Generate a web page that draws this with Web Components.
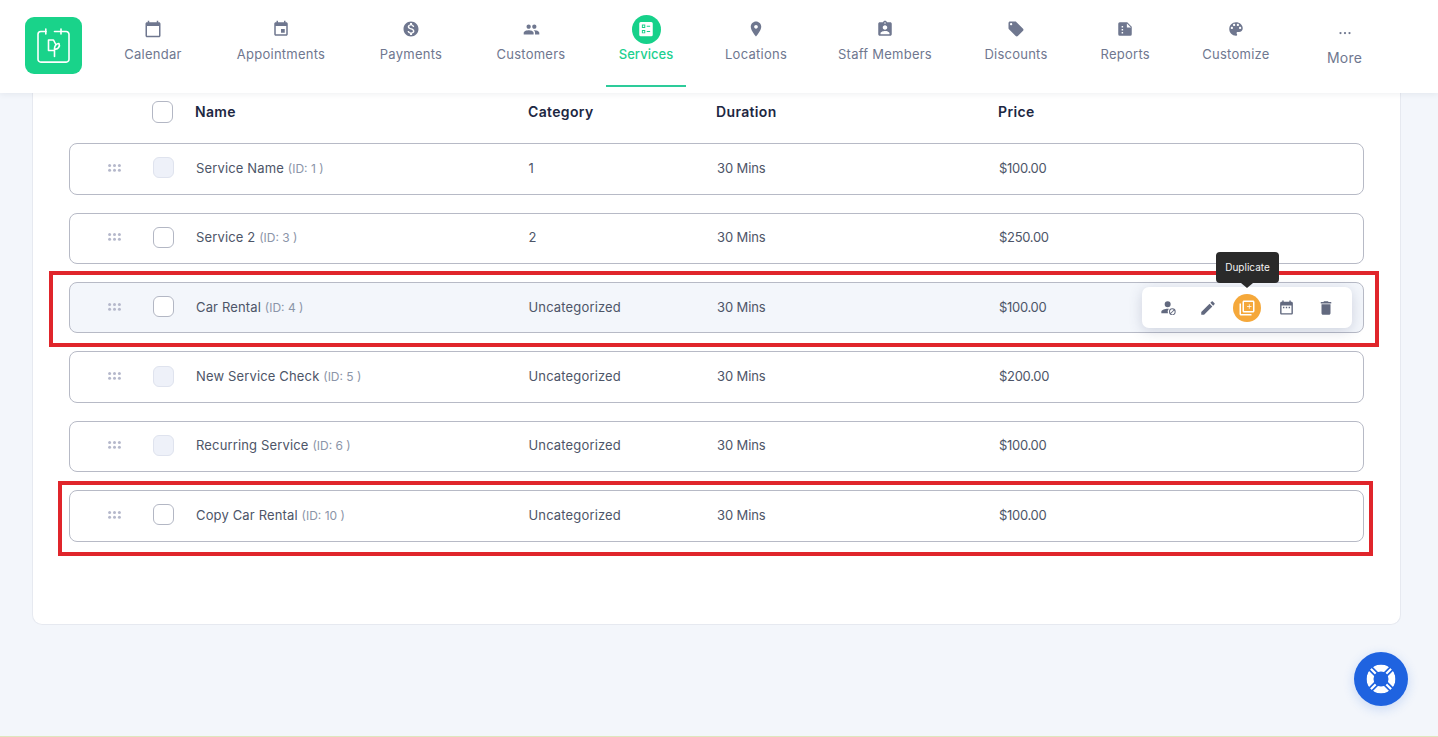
<!DOCTYPE html>
<html lang="en">
<head>
<meta charset="utf-8">
<title>Services</title>
<style>
  html, body { margin: 0; height: 100%; overflow: hidden; }
  body { background: #f3f6fb; font-family: Inter, "Open Sans", sans-serif; }
</style>
</head>
<body>
<app-page>
  <app-header slot="header">
    <nav-item icon="calendar" w="86">Calendar</nav-item>
    <nav-item icon="event" w="116">Appointments</nav-item>
    <nav-item icon="money" w="90">Payments</nav-item>
    <nav-item icon="people" w="96">Customers</nav-item>
    <nav-item icon="services" w="80" active>Services</nav-item>
    <nav-item icon="place" w="86">Locations</nav-item>
    <nav-item icon="badge" w="118">Staff Members</nav-item>
    <nav-item icon="tag" w="90">Discounts</nav-item>
    <nav-item icon="report" w="74.5">Reports</nav-item>
    <nav-item icon="palette" w="93">Customize</nav-item>
    <nav-item icon="more" w="70" more>More</nav-item>
  </app-header>
  <service-table>
    <service-row sid="1" category="1" duration="30 Mins" price="$100.00" off>Service Name</service-row>
    <service-row sid="3" category="2" duration="30 Mins" price="$250.00">Service 2</service-row>
    <service-row sid="4" category="Uncategorized" duration="30 Mins" price="$100.00" hover>
      Car Rental
      <mark-box slot="over" box="-11 15 14 -20"></mark-box>
      <row-actions slot="over"></row-actions>
    </service-row>
    <service-row sid="5" category="Uncategorized" duration="30 Mins" price="$200.00" off>New Service Check</service-row>
    <service-row sid="6" category="Uncategorized" duration="30 Mins" price="$100.00" off>Recurring Service</service-row>
    <service-row sid="10" category="Uncategorized" duration="30 Mins" price="$100.00">
      Copy Car Rental
      <mark-box slot="over" box="-9 9 14 -11"></mark-box>
    </service-row>
  </service-table>
  <help-button></help-button>
</app-page>

<script>
const ICONS = {
  calendar: 'M20 3h-1V1h-2v2H7V1H5v2H4c-1.1 0-2 .9-2 2v16c0 1.1.9 2 2 2h16c1.1 0 2-.9 2-2V5c0-1.1-.9-2-2-2zm0 18H4V8h16v13z',
  event: 'M17 12h-5v5h5v-5zM16 1v2H8V1H6v2H5c-1.11 0-1.99.9-1.99 2L3 19c0 1.1.89 2 2 2h14c1.1 0 2-.9 2-2V5c0-1.1-.9-2-2-2h-1V1h-2zm3 18H5V8h14v11z',
  money: 'M12 2C6.48 2 2 6.48 2 12s4.48 10 10 10 10-4.48 10-10S17.52 2 12 2zm1.41 16.09V20h-2.67v-1.93c-1.71-.36-3.16-1.46-3.27-3.4h1.96c.1 1.05.82 1.87 2.65 1.87 1.96 0 2.4-.98 2.4-1.59 0-.83-.44-1.61-2.67-2.14-2.48-.6-4.18-1.62-4.18-3.67 0-1.72 1.39-2.84 3.11-3.21V4h2.67v1.95c1.86.45 2.79 1.86 2.85 3.39H14.3c-.05-1.11-.64-1.87-2.22-1.87-1.5 0-2.4.68-2.4 1.64 0 .84.65 1.39 2.67 1.91s4.18 1.39 4.18 3.91c-.01 1.83-1.38 2.83-3.12 3.16z',
  people: 'M16 11c1.66 0 2.99-1.34 2.99-3S17.66 5 16 5c-1.66 0-3 1.34-3 3s1.34 3 3 3zm-8 0c1.66 0 2.99-1.34 2.99-3S9.66 5 8 5C6.34 5 5 6.34 5 8s1.34 3 3 3zm0 2c-2.33 0-7 1.17-7 3.5V19h14v-2.5c0-2.33-4.67-3.5-7-3.5zm8 0c-.29 0-.62.02-.97.05 1.16.84 1.97 1.97 1.97 3.45V19h6v-2.5c0-2.33-4.67-3.5-7-3.5z',
  services: 'M5 2.500h14a2 2 0 0 1 2 2v15a2 2 0 0 1-2 2H5a2 2 0 0 1-2-2v-15a2 2 0 0 1 2-2zm1.500 3.500v4.500h4.500V6h-4.500zm1.300 1.300h1.900v1.900H7.800V7.300zm-1.300 6v4.500h4.500v-4.500h-4.500zm1.300 1.300h1.900v1.900H7.800v-1.900zM13 7.500V9h4.500V7.500H13zm0 7V16h4.500v-1.500H13z',
  place: 'M12 2C8.13 2 5 5.13 5 9c0 5.25 7 13 7 13s7-7.75 7-13c0-3.87-3.130-7-7-7zm0 9.500c-1.380 0-2.500-1.120-2.500-2.500s1.120-2.500 2.500-2.500 2.500 1.120 2.500 2.500-1.120 2.500-2.500 2.500z',
  badge: 'M19 3h-4.180C14.400 1.840 13.300 1 12 1c-1.300 0-2.400.84-2.820 2H5c-1.100 0-2 .9-2 2v14c0 1.100.9 2 2 2h14c1.100 0 2-.9 2-2V5c0-1.100-.9-2-2-2zm-7 0c.55 0 1 .45 1 1s-.45 1-1 1-1-.45-1-1 .45-1 1-1zm0 4c1.660 0 3 1.340 3 3s-1.340 3-3 3-3-1.340-3-3 1.340-3 3-3zm6 12H6v-1.400c0-2 4-3.100 6-3.100s6 1.100 6 3.100V19z',
  tag: 'M21.410 11.580l-9-9C12.050 2.220 11.550 2 11 2H4c-1.100 0-2 .9-2 2v7c0 .55.22 1.050.59 1.420l9 9c.36.36.86.58 1.410.58.55 0 1.050-.22 1.410-.59l7-7c.37-.36.59-.86.59-1.410 0-.55-.23-1.060-.59-1.420zM5.500 7C4.670 7 4 6.330 4 5.500S4.670 4 5.500 4 7 4.670 7 5.500 6.330 7 5.500 7z',
  report: 'M5 3h10l6 6v10a2 2 0 0 1-2 2H5a2 2 0 0 1-2-2V5a2 2 0 0 1 2-2zm9.500 1.500v5.500h5.500zM7.500 8v2h2V8zm0 4v2h2v-2zm0 4v2h2v-2z',
  palette: 'M12 3c-4.970 0-9 4.030-9 9s4.030 9 9 9c.83 0 1.500-.67 1.500-1.500 0-.39-.15-.74-.39-1.010-.23-.26-.38-.61-.38-.99 0-.83.67-1.500 1.500-1.500H16c2.760 0 5-2.240 5-5 0-4.420-4.030-8-9-8zm-5.500 9c-.83 0-1.500-.67-1.500-1.500S5.670 9 6.500 9 8 9.670 8 10.500 7.330 12 6.500 12zm3-4C8.670 8 8 7.330 8 6.500S8.670 5 9.500 5s1.500.67 1.500 1.500S10.330 8 9.500 8zm5 0c-.83 0-1.500-.67-1.500-1.500S13.670 5 14.500 5s1.500.67 1.500 1.500S15.330 8 14.500 8zm3 4c-.83 0-1.500-.67-1.500-1.500S16.670 9 17.500 9s1.500.67 1.500 1.500-.67 1.500-1.500 1.500z',
  more: 'M6 10.500a1.500 1.500 0 1 0 0 3 1.500 1.500 0 0 0 0-3zm6 0a1.500 1.500 0 1 0 0 3 1.500 1.500 0 0 0 0-3zm6 0a1.500 1.500 0 1 0 0 3 1.500 1.500 0 0 0 0-3z',
  userOff: 'M11.500 2a4.500 4.500 0 1 1 0 9 4.500 4.500 0 0 1 0-9zM2 20v-2.500C2 14.500 8 13 11.500 13c.6 0 1.200.04 1.800.12A6.500 6.500 0 0 0 12 20H2zM18.500 12.500a5 5 0 1 1 0 10 5 5 0 0 1 0-10zm0 1.500a3.500 3.500 0 0 0-2.800 5.600l4.900-4.900a3.500 3.500 0 0 0-2.100-.7zm2.800 1.900-4.900 4.900a3.500 3.500 0 0 0 4.900-4.900z',
  edit: 'M3 17.250V21h3.750L17.810 9.940l-3.750-3.750L3 17.250zM20.710 7.040c.39-.39.39-1.020 0-1.410l-2.340-2.340c-.39-.39-1.020-.39-1.410 0l-1.830 1.830 3.750 3.750 1.830-1.830z',
  copy: 'M4 6H2v14c0 1.100.9 2 2 2h14v-2H4V6zm16-4H8c-1.100 0-2 .9-2 2v12c0 1.100.9 2 2 2h12c1.100 0 2-.9 2-2V4c0-1.100-.9-2-2-2zm0 14H8V4h12v12zm-5.500-3h1v-2.500H18v-1h-2.500V7h-1v2.500H12v1h2.500z',
  range: 'M9 11H7v2h2v-2zm4 0h-2v2h2v-2zm4 0h-2v2h2v-2zm2-7h-1V2h-2v2H8V2H6v2H5c-1.110 0-1.990.9-1.990 2L3 20c0 1.100.89 2 2 2h14c1.100 0 2-.9 2-2V6c0-1.100-.9-2-2-2zm0 16H5V9h14v11z',
  trash: 'M6 19c0 1.100.9 2 2 2h8c1.100 0 2-.9 2-2V7H6v12zM19 4h-3.500l-1-1h-5l-1 1H5v2h14V4z'
};

function icon(name, size) {
  return `<svg width="${size}" height="${size}" viewBox="0 0 24 24" fill="currentColor" fill-rule="evenodd"><path d="${ICONS[name]}"/></svg>`;
}

class AppPage extends HTMLElement {
  constructor() {
    super();
    this.attachShadow({ mode: 'open' });
    this.shadowRoot.innerHTML = `
    <style>
      :host { display: block; height: 737px; box-sizing: border-box; border-bottom: 1px solid #dfe6bd; }
      main { padding: 0 37px 0 32px; }
    </style>
    <slot name="header"></slot>
    <main><slot></slot></main>
    `;
  }
}
customElements.define('app-page', AppPage);

class AppHeader extends HTMLElement {
  constructor() {
    super();
    this.attachShadow({ mode: 'open' });
    this.shadowRoot.innerHTML = `
    <style>
      :host {
        display: flex;
        position: relative;
        z-index: 3;
        height: 93px;
        background: #fff;
        box-shadow: 0 1px 6px rgba(40, 50, 80, .08);
      }
      .logo { margin: 17px 28px 0 25px; width: 57px; height: 57px; flex: none; }
      nav { display: flex; gap: 27px; }
    </style>
    <svg class="logo" viewBox="0 0 57 57" fill="none" stroke="#fff" stroke-width="1.600" stroke-linecap="round" stroke-linejoin="round">
      <rect width="57" height="57" rx="9" fill="#19d38a" stroke="none"/>
      <path d="M21 14.500h-5.200a2.800 2.800 0 0 0-2.800 2.800v25a2.800 2.800 0 0 0 2.800 2.800h25.400a2.800 2.800 0 0 0 2.800-2.800v-25a2.800 2.800 0 0 0-2.800-2.800H29.500"/>
      <path d="M20.800 12v5M36 12v5"/>
      <path d="M23.500 33.500V23h5l2.300 4.500M23.500 33.500h5.500"/>
      <path d="M29.500 39.500V31.500c0-3 2.200-5.200 4.500-5 1.300 2.500-.8 6.300-4.500 5.500"/>
    </svg>
    <nav><slot></slot></nav>
    `;
  }
}
customElements.define('app-header', AppHeader);

class NavItem extends HTMLElement {
  constructor() {
    super();
    this.attachShadow({ mode: 'open' });
    this.shadowRoot.innerHTML = `
    <style>
      :host {
        display: block;
        position: relative;
        height: 87px;
        box-sizing: border-box;
        text-align: center;
        color: #6f778f;
        font-size: 13px;
        letter-spacing: .25px;
        flex: none;
      }
      .ic { height: 30px; margin-top: 14px; display: flex; align-items: center; justify-content: center; }
      .lb { line-height: 19px; padding-top: 1px; }
      :host([active]) { color: #1dd08f; font-weight: 500; letter-spacing: .05px; border-bottom: 2px solid #2dcb9a; }
      :host([active]) .ic span {
        display: flex; align-items: center; justify-content: center;
        width: 29px; height: 29px; border-radius: 50%;
        background: #16d18a; color: #fff;
      }
      :host([more]) .lb { font-size: 14px; padding-top: 4px; }
      :host([more]) svg { transform: translateY(4px); }
    </style>
    <div class="ic"><span></span></div>
    <div class="lb"><slot></slot></div>
    `;
  }
  connectedCallback() {
    this.style.width = this.getAttribute('w') + 'px';
    const name = this.getAttribute('icon');
    this.shadowRoot.querySelector('.ic span').innerHTML = icon(name, name === 'people' ? 17 : 18);
    this.shadowRoot.querySelector('svg').style.display = 'block';
  }
}
customElements.define('nav-item', NavItem);

class ServiceTable extends HTMLElement {
  constructor() {
    super();
    this.attachShadow({ mode: 'open' });
    this.shadowRoot.innerHTML = `
    <style>
      :host {
        display: block;
        height: 532px;
        box-sizing: border-box;
        padding: 0 36px;
        background: #fff;
        border: 1px solid #e6e9f0;
        border-top: 0;
        border-radius: 0 0 10px 10px;
      }
      .head {
        display: grid;
        grid-template-columns: 83px 43px 333px 188px 282px 1fr;
        height: 50.200px;
        box-sizing: border-box;
        padding-bottom: 12px;
        align-items: center;
        font-size: 14px;
        letter-spacing: .35px;
        font-weight: 600;
        color: #1d2742;
      }
      .head > div { height: 22px; line-height: 22px; }
      .check {
        width: 21px; height: 22px; box-sizing: border-box;
        border: 1px solid #b3b7c4; border-radius: 6px; background: #fff;
      }
      .rows { display: flex; flex-direction: column; gap: 18px; }
    </style>
    <div class="head">
      <div></div>
      <div class="check"></div>
      <div>Name</div><div>Category</div><div>Duration</div><div>Price</div>
    </div>
    <div class="rows"><slot></slot></div>
    `;
  }
}
customElements.define('service-table', ServiceTable);

class ServiceRow extends HTMLElement {
  constructor() {
    super();
    this.attachShadow({ mode: 'open' });
    this.shadowRoot.innerHTML = `
    <style>
      :host {
        display: grid;
        position: relative;
        height: 51.400px;
        box-sizing: border-box;
        padding: 0 0 2px 38px;
        grid-template-columns: 45px 43px 332.500px 188.500px 282px 1fr;
        align-items: center;
        border: 1px solid #b7bac6;
        border-radius: 8px;
        background: #fff;
        color: #4d5568;
        font-size: 13px;
        letter-spacing: .15px;
      }
      :host([hover]) { background: #f3f6fb; }
      .drag { display: block; color: #b5b8cb; }
      .check {
        width: 21px; height: 21px; box-sizing: border-box;
        border: 1px solid #b3b7c4; border-radius: 6px; background: #fff;
      }
      :host([off]) .check { background: #eef1f9; border-color: #dfe3ee; }
      .sid { color: #8b95a8; font-size: 12px; letter-spacing: 0; }
      .duration { letter-spacing: -.1px; }
      .price { letter-spacing: -.3px; }
    </style>
    <svg class="drag" width="13" height="8" viewBox="0 0 13 8" fill="currentColor">
      <circle cx="1.600" cy="1.500" r="1.500"/><circle cx="6.500" cy="1.500" r="1.500"/><circle cx="11.400" cy="1.500" r="1.500"/>
      <circle cx="1.600" cy="6.300" r="1.500"/><circle cx="6.500" cy="6.300" r="1.500"/><circle cx="11.400" cy="6.300" r="1.500"/>
    </svg>
    <div class="check"></div>
    <div><slot></slot> <span class="sid"></span></div>
    <div class="category"></div>
    <div class="duration"></div>
    <div class="price"></div>
    <slot name="over"></slot>
    `;
  }
  connectedCallback() {
    const sr = this.shadowRoot;
    sr.querySelector('.sid').textContent = `(ID: ${this.getAttribute('sid')} )`;
    sr.querySelector('.category').textContent = this.getAttribute('category');
    sr.querySelector('.duration').textContent = this.getAttribute('duration');
    sr.querySelector('.price').textContent = this.getAttribute('price');
  }
}
customElements.define('service-row', ServiceRow);

// red annotation frame drawn on top of the screenshot
class MarkBox extends HTMLElement {
  constructor() {
    super();
    this.attachShadow({ mode: 'open' });
    this.shadowRoot.innerHTML = `
    <style>
      :host { position: absolute; border: 4px solid #e0252b; pointer-events: none; }
    </style>
    `;
  }
  connectedCallback() {
    const [t, r, b, l] = this.getAttribute('box').split(' ').map(Number);
    this.style.top = (t - 1) + 'px';
    this.style.right = (-r - 1) + 'px';
    this.style.bottom = (-b - 1) + 'px';
    this.style.left = (l - 1) + 'px';
  }
}
customElements.define('mark-box', MarkBox);

class RowActions extends HTMLElement {
  constructor() {
    super();
    this.attachShadow({ mode: 'open' });
    this.shadowRoot.innerHTML = `
    <style>
      :host {
        position: absolute;
        right: 11px;
        top: 4px;
        width: 210px;
        height: 41px;
        box-sizing: border-box;
        padding-top: 1px;
        z-index: 2;
        display: flex;
        align-items: center;
        justify-content: center;
        gap: 11.500px;
        background: #fff;
        border-radius: 7px;
        box-shadow: 0 3px 14px rgba(60, 70, 110, .2);
        color: #62697f;
      }
      .btn { width: 28px; height: 28px; display: flex; align-items: center; justify-content: center; border-radius: 50%; position: relative; }
      .btn svg { display: block; }
      .on { background: #f5a83a; color: #fff; }
      .tip {
        position: absolute;
        left: 50%;
        bottom: 39px;
        width: 63px;
        height: 31px;
        margin-left: -31px;
        padding-top: 8px;
        box-sizing: border-box;
        text-align: center;
        background: #2a2a2a;
        color: #f4f4f4;
        border-radius: 4px;
        font-size: 10px;
        letter-spacing: 0;
        line-height: 14px;
      }
      .tip::after {
        content: '';
        position: absolute;
        left: 25px;
        top: 31px;
        border: 6px solid transparent;
        border-top: 5px solid #2a2a2a;
        border-bottom: 0;
      }
    </style>
    <div class="btn">${icon('userOff', 16)}</div>
    <div class="btn">${icon('edit', 18)}</div>
    <div class="btn on">${icon('copy', 18)}<div class="tip">Duplicate</div></div>
    <div class="btn">${icon('range', 17)}</div>
    <div class="btn">${icon('trash', 18)}</div>
    `;
  }
}
customElements.define('row-actions', RowActions);

class HelpButton extends HTMLElement {
  constructor() {
    super();
    this.attachShadow({ mode: 'open' });
    this.shadowRoot.innerHTML = `
    <style>
      :host {
        position: fixed;
        left: 1354px;
        top: 652px;
        width: 54px;
        height: 54px;
        border-radius: 50%;
        background: #1f63e0;
        box-shadow: 0 3px 12px rgba(31, 99, 224, .2);
        display: flex;
        align-items: center;
        justify-content: center;
      }
    </style>
    <svg width="30" height="30" viewBox="0 0 30 30">
      <circle cx="15" cy="15" r="14.500" fill="#fff"/>
      <g stroke="#1f63e0" stroke-width="5.500">
        <path d="M4 4l22 22M26 4L4 26"/>
      </g>
      <g stroke="#fff" stroke-width="2.200">
        <path d="M4.800 4.800l5 5M25.200 4.800l-5 5M25.200 25.200l-5-5M4.800 25.200l5-5"/>
      </g>
      <circle cx="15" cy="15" r="7.500" fill="#1f63e0"/>
      <circle cx="15" cy="15" r="19" fill="none" stroke="#1f63e0" stroke-width="9"/>
    </svg>
    `;
  }
}
customElements.define('help-button', HelpButton);
</script>
</body>
</html>
